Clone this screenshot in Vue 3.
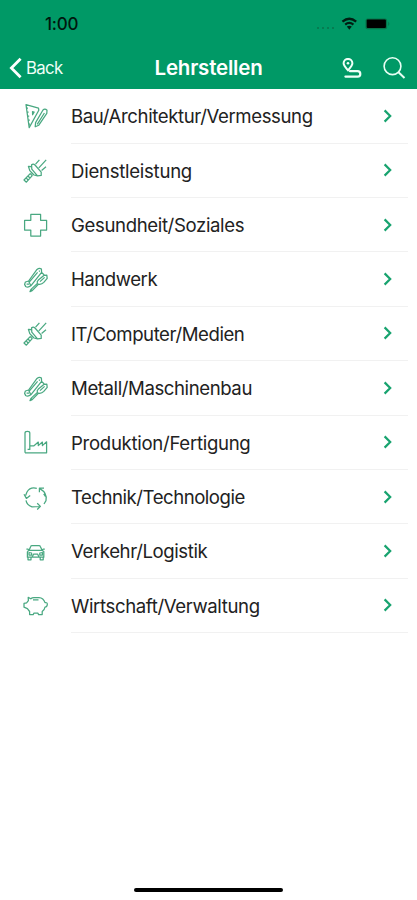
<script setup>
const rows = [
  { label: 'Bau/Architektur/Vermessung', icon: 'design', ls: -0.4 },
  { label: 'Dienstleistung', icon: 'plug', ls: -0.27 },
  { label: 'Gesundheit/Soziales', icon: 'cross', ls: -0.37 },
  { label: 'Handwerk', icon: 'tools', ls: -0.46 },
  { label: 'IT/Computer/Medien', icon: 'plug', ls: -0.44 },
  { label: 'Metall/Maschinenbau', icon: 'tools', ls: -0.42 },
  { label: 'Produktion/Fertigung', icon: 'factory', ls: -0.3 },
  { label: 'Technik/Technologie', icon: 'cycle', ls: -0.48 },
  { label: 'Verkehr/Logistik', icon: 'car', ls: -0.41 },
  { label: 'Wirtschaft/Verwaltung', icon: 'pig', ls: -0.38 },
]
const icons = {
  design: 'M4 2.6 16.5 6.2 16.8 8.2 7.2 25.6ZM10.5 9.6 12.2 10 10.6 12.8ZM4.4 6h1.6M5 10h1.6M5.6 14h1.6M6.2 18h1.6M6.6 22h1.4M21 8Q22.8 6 25 8.2L24.8 11.4L16.8 23.2 13.2 24.8 13.6 20.6ZM22.4 11 15.2 22.4',
  plug: 'M9.6 8.8Q11.2 7.4 13 9L19.2 16.2V19.4L15.5 19.8 9.8 13.2ZM9.8 10.6 6.4 10.4 7.8 14.6 12 19 15.5 19.8M13.6 8.2 17.4 3.8M16.8 11.8 24.2 3.8M19.6 14.4 24 10.8M9 16 10.8 18.2M8.2 17.6 10.2 19.6 4.4 26.2 2 24ZM4.4 22.2 6 24M6.2 20.2 8 22',
  cross: 'M8.8 3.4H18.6V9.3H24.6V19.1H18.6V25H8.8V19.1H2.6V9.3H8.8Z',
  tools: 'M15 4.4Q17.4 2.4 19.4 4L19.6 7.4 8.8 20.8Q6 23 3.6 21.4L2.6 19.4 3.4 17 6.6 16ZM6.8 17.6 15.6 7.4M4.6 19.2H7M16.8 6H18M6.6 16 8.8 20.8M10.2 25.6 16.4 19.2Q19.6 19.8 21.8 17.4L25.2 13.4 24.8 10.2 21.8 10.4 16.4 15Q14.6 16.6 15.4 18.4L9 24.4ZM18 16.6 22.6 12.4M9 24.4 8 26.6 10.2 25.6M19.6 7.4 22.2 10',
  factory: 'M3 24.8V5Q3 3.4 5.4 3.4T7.8 5V21.4H5.6M3 24.8H24.6V13.8L20.4 17.6V14L16.3 17.6V14L12 17.8H8',
  cycle: 'M14.8 5.4Q8.2 3.6 5 9L3.6 12.4M2 11.2 4.4 15.4 8.2 12.4M17.4 9.2V5.2H22M17.8 5.6Q25.6 10 24 17.6L22 21M21.7 10.8 23.4 13.5M4 17.4Q4.8 22.2 10 23.9L17.4 23.5M15.2 20.2 18.4 23.4 15.2 26.5',
  car: 'M7 13.4 8.8 9.2Q9 8.6 10 8.6H17Q18 8.6 18.2 9.2L20.2 13.4M4.4 12H6L7 13.4H20.2L21.2 12H22.8M5.4 14.6 7 13.4M20.2 13.4 21.8 14.6V20.2H5.4V14.6M6 20.2V22.8H9V20.2M18.2 20.2V22.8H21.2V20.2M10.2 20 11.5 17.2H15.7L17 20M7 15.5 9.6 16V18H7ZM20.4 15.5 17.8 16V18H20.4Z',
  pig: 'M6.2 6.4 8.8 7.8Q10 6.6 12 6.6H17Q21.5 6.8 23 11.6Q25.6 11.2 25.3 13.6T23 16Q22.6 19 20.2 20.5V23.6H16.6L15.8 22H12L11.2 23.6H7.6V20.5L5.4 17.6 2 16.2V12.4L4.6 11.8 6.4 9.6ZM11 8.9H16.5',
}
</script>

<template>
  <main class="screen">
    <header>
      <div class="status">
        <span class="time">1:00</span>
        <svg class="indicators" width="76" height="18" viewBox="0 0 76 18">
          <g fill="#08734b"><circle cx="3" cy="13" r="1" /><circle cx="8" cy="13" r="1" /><circle cx="13" cy="13" r="1" /><circle cx="18" cy="13" r="1" /></g>
          <g fill="none" stroke="#001e12" stroke-width="2.2"><path d="M27.4 6.7Q34.3.8 41.2 6.7M30.2 9.6Q34.3 6.1 38.4 9.6" /></g>
          <path d="M31.8 11.6Q34.3 9.8 36.8 11.6L34.3 14.7Z" fill="#001e12" />
          <rect x="50.5" y="3.4" width="21.6" height="10.8" rx="2" fill="#087249" />
          <rect x="51.7" y="4.6" width="19.2" height="8.4" rx="1" fill="#000" />
          <path d="M73.3 6.4Q75.3 8.8 73.3 11Z" fill="#087249" />
        </svg>
      </div>
      <nav>
        <a class="back">
          <svg width="14" height="22" viewBox="0 0 14 22"><path d="M11.6 1.8 2.4 11 11.6 20.2" fill="none" stroke="#fff" stroke-width="2.8" /></svg>
          <span>Back</span>
        </a>
        <h1>Lehrstellen</h1>
        <div class="actions">
          <svg class="route" width="20" height="22" viewBox="0 0 20 22">
            <path d="M6 12.3C3.2 9.2 1.6 7.4 1.6 5.3A4.4 4.4 0 0 1 10.4 5.3C10.4 7.4 8.8 9.2 6 12.3Z" fill="none" stroke="#effff7" stroke-width="2" />
            <circle cx="6" cy="5.2" r="1.3" fill="#effff7" />
            <path d="M8 13.2H15.6A2.7 2.7 0 0 1 15.6 18.6H3.4" fill="none" stroke="#effff7" stroke-width="2.2" stroke-linecap="round" />
          </svg>
          <svg width="24" height="24" viewBox="0 0 24 24"><g fill="none" stroke="#e8fff4" stroke-width="1.6"><circle cx="10.5" cy="10.2" r="8.4" /><path d="M16.5 16.3 22.5 22" stroke-width="2" /></g></svg>
        </div>
      </nav>
    </header>
    <ul>
      <li v-for="row in rows" :key="row.label">
        <svg class="icon" viewBox="0 0 28 28"><path :d="icons[row.icon]" /></svg>
        <div class="cell">
          <span class="label" :style="{ letterSpacing: row.ls + 'px' }">{{ row.label }}</span>
          <svg class="chevron" width="10" height="14" viewBox="0 0 10 14"><path d="M1.6 1.4 7.2 7 1.6 12.6" /></svg>
        </div>
      </li>
    </ul>
    <footer><div class="home"></div></footer>
  </main>
</template>

<style>
body { margin: 0; background: #fff; }
</style>

<style scoped>
.screen { width: 417px; height: 900px; display: flex; flex-direction: column; background: #fff; font-family: Inter, "Liberation Sans", sans-serif; overflow: hidden; }
header { height: 88.6px; flex: none; background: #009966; }
.status { height: 48px; box-sizing: border-box; padding: 0 26px 0 45px; display: flex; align-items: center; justify-content: space-between; }
.time { font-size: 17px; font-weight: 500; line-height: 20px; color: #00170e; letter-spacing: -.2px; }
.indicators { margin-top: -1px; }
nav { height: 40px; padding: 0 11px 0 9px; display: grid; grid-template-columns: 1fr auto 1fr; align-items: center; color: #fff; }
.back { display: flex; align-items: center; gap: 3px; font-size: 16.8px; line-height: 22px; letter-spacing: -.7px; color: #effff7; }
h1 { margin: 0; padding-left: 2px; font-size: 20.5px; line-height: 26px; font-weight: 600; letter-spacing: -.2px; }
.actions { display: flex; justify-content: flex-end; align-items: center; gap: 20px; }
.route { margin-top: 2px; }
ul { margin: 0; padding: .6px 0 0; list-style: none; }
li { height: 54.4px; display: flex; }
.icon { width: 28px; height: 28px; flex: none; margin: 12.6px 21px 0 22px; }
.icon path { fill: none; stroke: #49a881; stroke-width: 1.25; stroke-linejoin: round; }
.cell { flex: 1; height: 54.4px; box-sizing: border-box; margin-right: 9px; padding: 0 15px 0 0; border-bottom: 1px solid #f1f1f1; display: flex; align-items: center; justify-content: space-between; }
.label { padding-top: .6px; font-size: 18.6px; line-height: 26px; color: #222; white-space: nowrap; }
.chevron path { fill: none; stroke: #18a36f; stroke-width: 2.2; }
footer { margin-top: auto; height: 12.5px; display: flex; justify-content: center; }
.home { width: 149px; height: 4.5px; border-radius: 3px; background: #000; }
</style>
